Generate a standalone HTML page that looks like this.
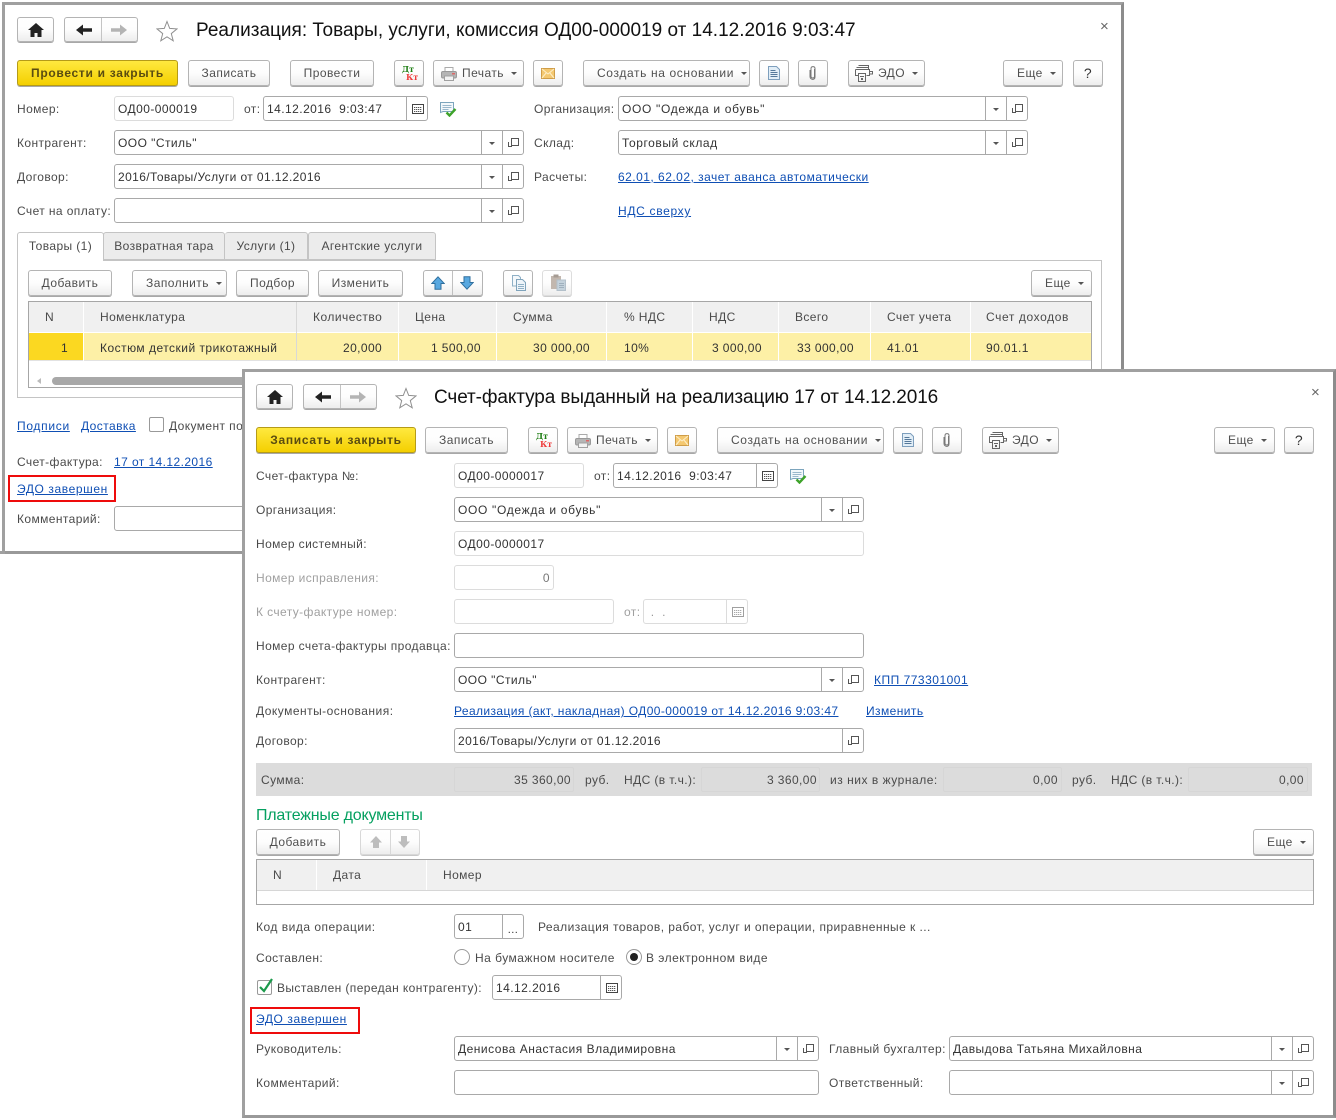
<!DOCTYPE html>
<html lang="ru"><head><meta charset="utf-8"><title>Реализация</title>
<style>
html,body{margin:0;padding:0;background:#fff}
body{position:relative;width:1336px;height:1120px;overflow:hidden;font:12px/14px "Liberation Sans",Arial,sans-serif;letter-spacing:.4px;color:#4a4a4a}
.w{position:absolute;box-sizing:border-box;background:#fff;border:3px solid #a0a0a0;border-right-color:#8c8c8c;border-bottom-color:#999}
.l,.v{position:absolute;white-space:nowrap}
.l,a{margin-top:1px}
.g{color:#a0a0a0}
.r{text-align:right}
a{color:#0f4fb4;text-decoration:underline;position:absolute;white-space:nowrap;letter-spacing:.42px}
.b{position:absolute;box-sizing:border-box;height:26px;border:1px solid #b4b4b4;border-radius:3px;background:linear-gradient(#fff 0,#fdfdfd 50%,#ededed 100%);box-shadow:0 1px 0 #a8a8a8;text-align:center;line-height:24px;white-space:nowrap;color:#4f4f4f;letter-spacing:.45px}
.b svg{position:absolute}
.y{background:linear-gradient(#ffe93f,#f4cf00);border-color:#b59b18;font-weight:bold;color:#5a4c10;letter-spacing:.7px}
.dn{text-align:left}
.dn::after{content:"";display:inline-block;margin-left:7px;vertical-align:2px;border:3px solid transparent;border-top:3px solid #555;border-bottom:0}
.f{position:absolute;box-sizing:border-box;height:25px;border:1px solid #a9a9a9;border-radius:3px;background:#fff;padding-left:3px;line-height:25px;color:#333;white-space:nowrap;letter-spacing:.45px}
.f.lt{border-color:#dcdcdc}
.c1,.c2,.c3{position:absolute;top:0;bottom:0;width:20px;border-left:1px solid #a9a9a9;display:block}
.c1{right:21px}.c2,.c3{right:0}
.c1::after{content:"";position:absolute;left:7px;top:11px;border:3px solid transparent;border-top:3px solid #555;border-bottom:0}
.c2::before{content:"";position:absolute;left:8px;top:7px;width:6px;height:6px;border:1px solid #555;background:#fff}
.c2::after{content:"";position:absolute;left:5px;top:11px;width:3px;height:4px;border-left:1px solid #555;border-bottom:1px solid #555}
.c3 svg{position:absolute;left:5px;top:7px}
.h{position:absolute;background:#f0f0f0}
.s{position:absolute;background:#fff}
.rb{position:absolute;box-sizing:border-box;border:2px solid #ee0c0c}
.x{position:absolute;color:#666;font-size:15px;line-height:14px;letter-spacing:0}
svg{display:block}
.ic{position:absolute}
.dk{font:bold 8px/8px "DejaVu Serif",serif;letter-spacing:0}
</style></head><body>
<svg width="0" height="0" style="position:absolute">
<symbol id="home" viewBox="0 0 16 14"><path d="M8 0L0 7h2.500v7h4v-4h3v4h4V7H16z" fill="#222"/></symbol>
<symbol id="la" viewBox="0 0 16 12"><path d="M0 6l7-5.500V4.300h9v3.400H7v3.800z" fill="#222"/></symbol>
<symbol id="ra" viewBox="0 0 16 12"><path d="M16 6L9 .5V4.300H0v3.400h9v3.800z" fill="#b4b4b4"/></symbol>
<symbol id="star" viewBox="0 0 22 22"><path d="M11 1.500l2.700 6.900 7.300.5-5.700 4.700 1.900 7.200-6.200-4-6.200 4 1.900-7.200L1 8.900l7.300-.5z" fill="#fff" stroke="#8f8f8f"/></symbol>
<symbol id="cal" viewBox="0 0 12 10"><path d="M.5.5h11v9H.5z" fill="#fff" stroke="#444"/><path d="M2 3h8v1H2zM2 5h8v1H2zM2 7h8v1H2z" fill="#555"/><path d="M3 3h1v5H3zM5 3h1v5H5zM7 3h1v5H7zM9 3h1v5H9z" fill="#fff" opacity=".7"/></symbol>
<symbol id="print" viewBox="0 0 16 14"><path d="M4 .5h8v4H4z" fill="#fff" stroke="#aaa"/><rect x=".5" y="4.500" width="15" height="6.500" rx="1.500" fill="#b5b5b5" stroke="#999"/><path d="M11 6h3v1.500h-3z" fill="#d66"/><path d="M3.500 9h9v4.500h-9z" fill="#f2f2f2" stroke="#a0a0a0"/></symbol>
<symbol id="mail" viewBox="0 0 14 11"><path d="M.5.500h13v10H.5z" fill="#f4c870" stroke="#cf9d48"/><path d="M1 1l6 5 6-5M1 10l4.500-5.500M13 10L8.500 4.500" fill="none" stroke="#fdeec8"/></symbol>
<symbol id="doc" viewBox="0 0 12 14"><path d="M.5.500h8l3 3v10H.5z" fill="#e2eef7" stroke="#7e9fbd"/><path d="M2.500 4h5v1h-5zM2.500 6h7v1h-7zM2.500 8h7v1h-7zM2.500 10h7v1h-7z" fill="#55789a"/></symbol>
<symbol id="clip" viewBox="0 0 8 16"><path d="M5.500 4v7.500c0 2-3.500 2-3.500 0V3.500C2 1 6 1 6 3.500v8.500c0 3.500-5 3-5-.5V5" fill="none" stroke="#777"/></symbol>
<symbol id="edo" viewBox="0 0 18 17"><path d="M3.500.5h10v2M1.500 2.500h12v2M.5 4.500h14v6h-3M.5 4.500v6h3M3.500 8.500h7v8h-7zM14.500 6.500h3v2.500h-3z" fill="none" stroke="#666"/><path d="M5 11h4v1H5zM6 13h2v2H6z" fill="#666"/></symbol>
<symbol id="chk" viewBox="0 0 17 15"><path d="M.5.500h13v9H3l-2.500 1z" fill="#f3f8fb" stroke="#7ca5bd"/><path d="M2.500 3h9v1h-9zM2.500 5h9v1h-9zM2.500 7h6v1h-6z" fill="#9ab8cc"/><path d="M6.500 10.500l3 3 6-6.500" fill="none" stroke="#3ea32a" stroke-width="2.400"/></symbol>
<symbol id="up" viewBox="0 0 14 14"><path d="M7 .8L.8 7.500h3.200v5.700h6V7.500h3.200z" fill="#58a8e0" stroke="#2f6f9e"/></symbol>
<symbol id="dw" viewBox="0 0 14 14"><path d="M7 13.200L.8 6.500h3.200V.8h6v5.700h3.200z" fill="#58a8e0" stroke="#2f6f9e"/></symbol>
<symbol id="upg" viewBox="0 0 14 14"><path d="M7 1L1 7.500h3V13h6V7.500h3z" fill="#bdbdbd"/></symbol>
<symbol id="dwg" viewBox="0 0 14 14"><path d="M7 13L1 6.500h3V1h6v5.500h3z" fill="#bdbdbd"/></symbol>
<symbol id="copy" viewBox="0 0 14 16"><path d="M.5.500h6l2 2V11H.5z" fill="#f4f8fb" stroke="#8fb0c6"/><path d="M4.500 4.500h6l3 3v8h-9z" fill="#eef4f9" stroke="#7fa3bb"/><path d="M6 9h6v1H6zM6 11h6v1H6zM6 13h6v1H6z" fill="#8fb0c6"/></symbol>
<symbol id="paste" viewBox="0 0 16 17"><path d="M1 2h10v13H1z" fill="#c2b7ae"/><path d="M3.500.5h5v3h-5z" fill="#a59b93"/><path d="M7 6h8.500v10.500H7z" fill="#c4d2dc" stroke="#b3c0ca"/><path d="M9 9h5v1H9zM9 11h5v1H9zM9 13h5v1H9z" fill="#9fb0bd"/></symbol>
</svg>

<!-- WINDOW 1 -->
<div class="w" style="left:2px;top:2px;width:1122px;height:552px"></div>
<div style="position:absolute;left:0;top:551px;width:5px;height:3px;background:#a0a0a0"></div>

<div class="b" style="left:17px;top:17px;width:37px;height:25px"><svg width="16" height="14" style="left:10px;top:5px"><use href="#home"/></svg></div>
<div class="b" style="left:64px;top:17px;width:74px;height:25px"><svg width="16" height="12" style="left:11px;top:6px"><use href="#la"/></svg><span style="position:absolute;left:36px;top:0;bottom:0;border-left:1px solid #c4c4c4"></span><svg width="16" height="12" style="left:46px;top:6px"><use href="#ra"/></svg></div>
<svg class="ic" width="22" height="22" style="left:156px;top:20px"><use href="#star"/></svg>
<div class="v" style="left:196px;top:20px;font-size:19px;line-height:21px;color:#111;letter-spacing:.01px">Реализация: Товары, услуги, комиссия ОД00-000019 от 14.12.2016 9:03:47</div>
<div class="x" style="left:1100px;top:20px">×</div>

<div class="b y" style="left:17px;top:60px;width:161px">Провести и закрыть</div>
<div class="b" style="left:188px;top:60px;width:82px">Записать</div>
<div class="b" style="left:290px;top:60px;width:84px">Провести</div>
<div class="b dk" style="left:394px;top:60px;width:30px"><span style="position:absolute;left:7px;top:4px;color:#1d7d12">Дт</span><span style="position:absolute;left:11px;top:12px;color:#ee3a3a">Кт</span></div>
<div class="b dn" style="left:433px;top:60px;width:91px;padding-left:28px"><svg width="16" height="14" style="left:7px;top:6px"><use href="#print"/></svg>Печать</div>
<div class="b" style="left:533px;top:60px;width:30px"><svg width="14" height="11" style="left:7px;top:7px"><use href="#mail"/></svg></div>
<div class="b dn" style="left:583px;top:60px;width:167px;padding-left:13px;letter-spacing:.63px">Создать на основании</div>
<div class="b" style="left:759px;top:60px;width:30px"><svg width="12" height="14" style="left:8px;top:5px"><use href="#doc"/></svg></div>
<div class="b" style="left:798px;top:60px;width:30px"><svg width="8" height="16" style="left:10px;top:4px"><use href="#clip"/></svg></div>
<div class="b dn" style="left:848px;top:60px;width:77px;padding-left:29px"><svg width="18" height="17" style="left:6px;top:4px"><use href="#edo"/></svg>ЭДО</div>
<div class="b dn" style="left:1003px;top:60px;width:60px;padding-left:13px">Еще</div>
<div class="b" style="left:1073px;top:60px;width:30px;font-size:14px;color:#333">?</div>

<div class="l" style="left:17px;top:101px">Номер:</div>
<div class="f lt" style="left:114px;top:96px;width:120px">ОД00-000019</div>
<div class="l" style="left:244px;top:101px">от:</div>
<div class="f" style="left:263px;top:96px;width:165px">14.12.2016 &nbsp;9:03:47<span class="c3"><svg width="12" height="10"><use href="#cal"/></svg></span></div>
<svg class="ic" width="17" height="15" style="left:440px;top:102px"><use href="#chk"/></svg>
<div class="l" style="left:534px;top:101px">Организация:</div>
<div class="f" style="left:618px;top:96px;width:410px;letter-spacing:.68px">ООО "Одежда и обувь"<span class="c1"></span><span class="c2"></span></div>

<div class="l" style="left:17px;top:135px">Контрагент:</div>
<div class="f" style="left:114px;top:130px;width:410px">ООО "Стиль"<span class="c1"></span><span class="c2"></span></div>
<div class="l" style="left:534px;top:135px">Склад:</div>
<div class="f" style="left:618px;top:130px;width:410px;letter-spacing:.58px">Торговый склад<span class="c1"></span><span class="c2"></span></div>

<div class="l" style="left:17px;top:169px">Договор:</div>
<div class="f" style="left:114px;top:164px;width:410px;letter-spacing:.4px">2016/Товары/Услуги от 01.12.2016<span class="c1"></span><span class="c2"></span></div>
<div class="l" style="left:534px;top:169px">Расчеты:</div>
<a style="left:618px;top:169px;letter-spacing:.48px">62.01, 62.02, зачет аванса автоматически</a>

<div class="l" style="left:17px;top:203px">Счет на оплату:</div>
<div class="f" style="left:114px;top:198px;width:410px"><span class="c1"></span><span class="c2"></span></div>
<a style="left:618px;top:203px;letter-spacing:.68px">НДС сверху</a>

<!-- tabs -->
<div style="position:absolute;left:17px;top:260px;width:1085px;height:138px;box-sizing:border-box;border:1px solid #c4c4c4"></div>
<div style="position:absolute;box-sizing:border-box;left:103px;top:232px;width:122px;height:28px;background:#ececec;border:1px solid #c4c4c4;border-radius:3px 3px 0 0;line-height:26px;text-align:center">Возвратная тара</div>
<div style="position:absolute;box-sizing:border-box;left:225px;top:232px;width:83px;height:28px;background:#ececec;border:1px solid #c4c4c4;border-left:0;border-radius:3px 3px 0 0;line-height:26px;text-align:center">Услуги (1)</div>
<div style="position:absolute;box-sizing:border-box;left:308px;top:232px;width:128px;height:28px;background:#ececec;border:1px solid #c4c4c4;border-radius:3px 3px 0 0;line-height:26px;text-align:center">Агентские услуги</div>
<div style="position:absolute;box-sizing:border-box;left:17px;top:232px;width:87px;height:29px;background:#fff;border:1px solid #c4c4c4;border-bottom:0;border-radius:3px 3px 0 0;line-height:26px;text-align:center">Товары (1)</div>

<div class="b" style="left:28px;top:270px;width:84px">Добавить</div>
<div class="b dn" style="left:132px;top:270px;width:95px;padding-left:13px">Заполнить</div>
<div class="b" style="left:236px;top:270px;width:73px">Подбор</div>
<div class="b" style="left:318px;top:270px;width:85px">Изменить</div>
<div class="b" style="left:423px;top:270px;width:60px"><svg width="14" height="14" style="left:7px;top:5px"><use href="#up"/></svg><span style="position:absolute;left:28px;top:0;bottom:0;border-left:1px solid #c0c0c0"></span><svg width="14" height="14" style="left:36px;top:5px"><use href="#dw"/></svg></div>
<div class="b" style="left:503px;top:270px;width:30px"><svg width="14" height="16" style="left:8px;top:4px"><use href="#copy"/></svg></div>
<div class="b" style="left:542px;top:270px;width:30px;border-color:#ddd;box-shadow:0 1px 0 #ccc"><svg width="16" height="17" style="left:7px;top:3px"><use href="#paste"/></svg></div>
<div class="b dn" style="left:1031px;top:270px;width:61px;padding-left:13px">Еще</div>

<!-- table 1 -->
<div style="position:absolute;left:28px;top:301px;width:1064px;height:87px;box-sizing:border-box;border:1px solid #a6a6a6;background:#fff"></div>
<div class="h" style="left:29px;top:302px;width:1062px;height:30px"></div>
<div class="s" style="left:29px;top:360px;width:1062px;height:1px;background:#e2e2e2"></div>
<div style="position:absolute;left:29px;top:333px;width:54px;height:27px;background:#fbd821"></div>
<div style="position:absolute;left:84px;top:333px;width:1007px;height:27px;background:#fdf0a6"></div>
<div style="position:absolute;left:83px;top:302px;width:1px;height:59px;background:#fff"></div>
<div style="position:absolute;left:296px;top:302px;width:1px;height:59px;background:#d8d8d8"></div>
<div style="position:absolute;left:398px;top:302px;width:1px;height:59px;background:#fff"></div>
<div style="position:absolute;left:496px;top:302px;width:1px;height:59px;background:#fff"></div>
<div style="position:absolute;left:606px;top:302px;width:1px;height:59px;background:#fff"></div>
<div style="position:absolute;left:692px;top:302px;width:1px;height:59px;background:#fff"></div>
<div style="position:absolute;left:778px;top:302px;width:1px;height:59px;background:#fff"></div>
<div style="position:absolute;left:870px;top:302px;width:1px;height:59px;background:#fff"></div>
<div style="position:absolute;left:970px;top:302px;width:1px;height:59px;background:#fff"></div>
<div class="l" style="left:45px;top:309px">N</div>
<div class="l" style="left:100px;top:309px">Номенклатура</div>
<div class="l" style="left:313px;top:309px;letter-spacing:.48px">Количество</div>
<div class="l" style="left:415px;top:309px">Цена</div>
<div class="l" style="left:513px;top:309px">Сумма</div>
<div class="l" style="left:624px;top:309px">% НДС</div>
<div class="l" style="left:709px;top:309px">НДС</div>
<div class="l" style="left:795px;top:309px">Всего</div>
<div class="l" style="left:887px;top:309px">Счет учета</div>
<div class="l" style="left:986px;top:309px;letter-spacing:.6px">Счет доходов</div>
<div class="l" style="left:61px;top:340px;color:#333">1</div>
<div class="l" style="left:100px;top:340px;color:#333;letter-spacing:.48px">Костюм детский трикотажный</div>
<div class="l" style="left:343px;top:340px;color:#333">20,000</div>
<div class="l" style="left:431px;top:340px;color:#333">1 500,00</div>
<div class="l" style="left:533px;top:340px;color:#333">30 000,00</div>
<div class="l" style="left:624px;top:340px;color:#333">10%</div>
<div class="l" style="left:712px;top:340px;color:#333">3 000,00</div>
<div class="l" style="left:797px;top:340px;color:#333">33 000,00</div>
<div class="l" style="left:887px;top:340px;color:#333">41.01</div>
<div class="l" style="left:986px;top:340px;color:#333">90.01.1</div>
<div style="position:absolute;left:37px;top:378px;border:3px solid transparent;border-right:4px solid #bbb;border-left:0"></div>
<div style="position:absolute;left:52px;top:377px;width:195px;height:8px;border-radius:4px;background:#a8a8a8"></div>

<a style="left:17px;top:418px;letter-spacing:.7px">Подписи</a>
<a style="left:81px;top:418px">Доставка</a>
<div style="position:absolute;box-sizing:border-box;left:149px;top:417px;width:15px;height:15px;border:1px solid #999;border-radius:2px;background:#fff"></div>
<div class="l" style="left:169px;top:418px">Документ подписан</div>
<div class="l" style="left:17px;top:454px">Счет-фактура:</div>
<a style="left:114px;top:454px">17 от 14.12.2016</a>
<div class="rb" style="left:8px;top:475px;width:108px;height:27px"></div>
<a style="left:17px;top:481px;letter-spacing:.6px">ЭДО завершен</a>
<div class="l" style="left:17px;top:511px">Комментарий:</div>
<div class="f" style="left:114px;top:506px;width:200px"></div>

<!-- WINDOW 2 -->
<div class="w" style="left:242px;top:369px;width:1094px;height:749px;z-index:0"></div>

<div class="b" style="left:256px;top:384px;width:37px;height:25px"><svg width="16" height="14" style="left:10px;top:5px"><use href="#home"/></svg></div>
<div class="b" style="left:303px;top:384px;width:74px;height:25px"><svg width="16" height="12" style="left:11px;top:6px"><use href="#la"/></svg><span style="position:absolute;left:36px;top:0;bottom:0;border-left:1px solid #c4c4c4"></span><svg width="16" height="12" style="left:46px;top:6px"><use href="#ra"/></svg></div>
<svg class="ic" width="22" height="22" style="left:395px;top:387px"><use href="#star"/></svg>
<div class="v" style="left:434px;top:387px;font-size:19px;line-height:21px;color:#111;letter-spacing:-.1px">Счет-фактура выданный на реализацию 17 от 14.12.2016</div>
<div class="x" style="left:1311px;top:386px">×</div>

<div class="b y" style="left:256px;top:427px;width:160px">Записать и закрыть</div>
<div class="b" style="left:425px;top:427px;width:83px">Записать</div>
<div class="b dk" style="left:528px;top:427px;width:30px"><span style="position:absolute;left:7px;top:4px;color:#1d7d12">Дт</span><span style="position:absolute;left:11px;top:12px;color:#ee3a3a">Кт</span></div>
<div class="b dn" style="left:567px;top:427px;width:91px;padding-left:28px"><svg width="16" height="14" style="left:7px;top:6px"><use href="#print"/></svg>Печать</div>
<div class="b" style="left:667px;top:427px;width:30px"><svg width="14" height="11" style="left:7px;top:7px"><use href="#mail"/></svg></div>
<div class="b dn" style="left:717px;top:427px;width:167px;padding-left:13px;letter-spacing:.63px">Создать на основании</div>
<div class="b" style="left:893px;top:427px;width:30px"><svg width="12" height="14" style="left:8px;top:5px"><use href="#doc"/></svg></div>
<div class="b" style="left:932px;top:427px;width:30px"><svg width="8" height="16" style="left:10px;top:4px"><use href="#clip"/></svg></div>
<div class="b dn" style="left:982px;top:427px;width:77px;padding-left:29px"><svg width="18" height="17" style="left:6px;top:4px"><use href="#edo"/></svg>ЭДО</div>
<div class="b dn" style="left:1214px;top:427px;width:61px;padding-left:13px">Еще</div>
<div class="b" style="left:1284px;top:427px;width:30px;font-size:14px;color:#333">?</div>

<div class="l" style="left:256px;top:468px">Счет-фактура №:</div>
<div class="f lt" style="left:454px;top:463px;width:130px">ОД00-0000017</div>
<div class="l" style="left:594px;top:468px">от:</div>
<div class="f" style="left:613px;top:463px;width:165px">14.12.2016 &nbsp;9:03:47<span class="c3"><svg width="12" height="10"><use href="#cal"/></svg></span></div>
<svg class="ic" width="17" height="15" style="left:790px;top:469px"><use href="#chk"/></svg>

<div class="l" style="left:256px;top:502px">Организация:</div>
<div class="f" style="left:454px;top:497px;width:410px;letter-spacing:.68px">ООО "Одежда и обувь"<span class="c1"></span><span class="c2"></span></div>
<div class="l" style="left:256px;top:536px">Номер системный:</div>
<div class="f lt" style="left:454px;top:531px;width:410px">ОД00-0000017</div>
<div class="l g" style="left:256px;top:570px">Номер исправления:</div>
<div class="f lt r" style="left:454px;top:565px;width:100px;padding-right:3px;color:#777">0</div>
<div class="l g" style="left:256px;top:604px">К счету-фактуре номер:</div>
<div class="f lt" style="left:454px;top:599px;width:160px"></div>
<div class="l g" style="left:624px;top:604px">от:</div>
<div class="f lt" style="left:643px;top:599px;width:105px;color:#999">&nbsp;.&nbsp;&nbsp;.<span class="c3" style="border-left-color:#dcdcdc"><svg width="12" height="10" style="opacity:.5"><use href="#cal"/></svg></span></div>
<div class="l" style="left:256px;top:638px">Номер счета-фактуры продавца:</div>
<div class="f" style="left:454px;top:633px;width:410px"></div>
<div class="l" style="left:256px;top:672px">Контрагент:</div>
<div class="f" style="left:454px;top:667px;width:410px">ООО "Стиль"<span class="c1"></span><span class="c2"></span></div>
<a style="left:874px;top:672px;letter-spacing:.5px">КПП 773301001</a>
<div class="l" style="left:256px;top:703px;letter-spacing:.48px">Документы-основания:</div>
<a style="left:454px;top:703px;letter-spacing:.4px">Реализация (акт, накладная) ОД00-000019 от 14.12.2016 9:03:47</a>
<a style="left:866px;top:703px">Изменить</a>
<div class="l" style="left:256px;top:733px">Договор:</div>
<div class="f" style="left:454px;top:728px;width:410px;letter-spacing:.4px">2016/Товары/Услуги от 01.12.2016<span class="c2"></span></div>

<div style="position:absolute;left:256px;top:763px;width:1056px;height:33px;background:#dcdcdc"></div>
<div style="position:absolute;box-sizing:border-box;left:454px;top:767px;width:120px;height:25px;border:1px solid #d6d6d6;border-radius:2px"></div>
<div style="position:absolute;box-sizing:border-box;left:701px;top:767px;width:119px;height:25px;border:1px solid #d6d6d6;border-radius:2px"></div>
<div style="position:absolute;box-sizing:border-box;left:943px;top:767px;width:119px;height:25px;border:1px solid #d6d6d6;border-radius:2px"></div>
<div style="position:absolute;box-sizing:border-box;left:1188px;top:767px;width:120px;height:25px;border:1px solid #d6d6d6;border-radius:2px"></div>
<div class="l" style="left:261px;top:772px">Сумма:</div>
<div class="l" style="left:514px;top:772px">35 360,00</div>
<div class="l" style="left:585px;top:772px">руб.</div>
<div class="l" style="left:624px;top:772px">НДС (в т.ч.):</div>
<div class="l" style="left:767px;top:772px">3 360,00</div>
<div class="l" style="left:830px;top:772px;letter-spacing:.52px">из них в журнале:</div>
<div class="l" style="left:1033px;top:772px">0,00</div>
<div class="l" style="left:1072px;top:772px">руб.</div>
<div class="l" style="left:1111px;top:772px">НДС (в т.ч.):</div>
<div class="l" style="left:1279px;top:772px">0,00</div>

<div class="l" style="left:256px;top:806px;font-size:16px;line-height:18px;color:#05a060;letter-spacing:-.2px">Платежные документы</div>
<div class="b" style="left:256px;top:829px;width:84px">Добавить</div>
<div class="b" style="left:360px;top:829px;width:60px;border-color:#d8d8d8;box-shadow:0 1px 0 #c8c8c8"><svg width="14" height="14" style="left:8px;top:5px"><use href="#upg"/></svg><span style="position:absolute;left:29px;top:0;bottom:0;border-left:1px solid #d8d8d8"></span><svg width="14" height="14" style="left:36px;top:5px"><use href="#dwg"/></svg></div>
<div class="b dn" style="left:1253px;top:829px;width:61px;padding-left:13px">Еще</div>

<div style="position:absolute;box-sizing:border-box;left:256px;top:859px;width:1058px;height:46px;border:1px solid #a6a6a6;background:#fff"></div>
<div class="h" style="left:257px;top:860px;width:1056px;height:30px;border-bottom:1px solid #d6d6d6"></div>
<div style="position:absolute;left:316px;top:860px;width:1px;height:30px;background:#fff"></div>
<div style="position:absolute;left:426px;top:860px;width:1px;height:30px;background:#fff"></div>
<div class="l" style="left:273px;top:867px">N</div>
<div class="l" style="left:333px;top:867px">Дата</div>
<div class="l" style="left:443px;top:867px">Номер</div>

<div class="l" style="left:256px;top:919px;letter-spacing:.5px">Код вида операции:</div>
<div class="f" style="left:454px;top:914px;width:70px">01<span class="c3" style="text-align:center;line-height:30px;font-size:11px">...</span></div>
<div class="l" style="left:538px;top:919px;letter-spacing:.44px">Реализация товаров, работ, услуг и операции, приравненные к ...</div>

<div class="l" style="left:256px;top:950px">Составлен:</div>
<div style="position:absolute;box-sizing:border-box;left:454px;top:949px;width:16px;height:16px;border:1px solid #999;border-radius:50%;background:#fff"></div>
<div class="l" style="left:475px;top:950px;letter-spacing:.48px">На бумажном носителе</div>
<div style="position:absolute;box-sizing:border-box;left:626px;top:949px;width:16px;height:16px;border:1px solid #999;border-radius:50%;background:#fff"></div>
<div style="position:absolute;left:630px;top:953px;width:8px;height:8px;border-radius:50%;background:#222"></div>
<div class="l" style="left:646px;top:950px;letter-spacing:.48px">В электронном виде</div>

<div style="position:absolute;box-sizing:border-box;left:257px;top:980px;width:15px;height:15px;border:1px solid #999;border-radius:2px;background:#fff"></div>
<svg class="ic" width="16" height="16" style="left:258px;top:978px"><path d="M2 9l4 4 8-12" fill="none" stroke="#1c9a4c" stroke-width="2.200"/></svg>
<div class="l" style="left:277px;top:980px">Выставлен (передан контрагенту):</div>
<div class="f" style="left:492px;top:975px;width:130px">14.12.2016<span class="c3"><svg width="12" height="10"><use href="#cal"/></svg></span></div>

<div class="rb" style="left:250px;top:1007px;width:110px;height:27px"></div>
<a style="left:256px;top:1011px;letter-spacing:.6px">ЭДО завершен</a>

<div class="l" style="left:256px;top:1041px">Руководитель:</div>
<div class="f" style="left:454px;top:1036px;width:365px;letter-spacing:.5px">Денисова Анастасия Владимировна<span class="c1"></span><span class="c2"></span></div>
<div class="l" style="left:829px;top:1041px">Главный бухгалтер:</div>
<div class="f" style="left:949px;top:1036px;width:365px">Давыдова Татьяна Михайловна<span class="c1"></span><span class="c2"></span></div>
<div class="l" style="left:256px;top:1075px">Комментарий:</div>
<div class="f" style="left:454px;top:1070px;width:365px"></div>
<div class="l" style="left:829px;top:1075px">Ответственный:</div>
<div class="f" style="left:949px;top:1070px;width:365px"><span class="c1"></span><span class="c2"></span></div>
</body></html>
